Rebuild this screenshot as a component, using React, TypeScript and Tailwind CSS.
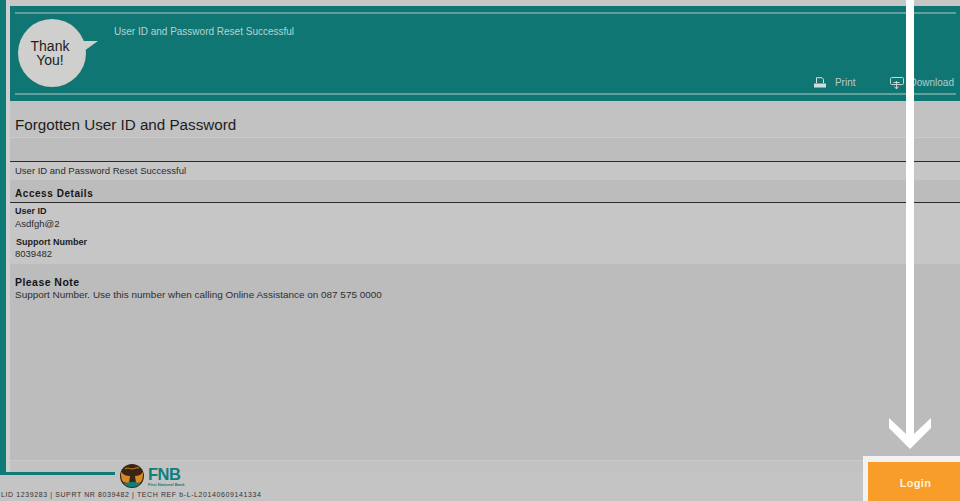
const font = { fontFamily: "'Liberation Sans', Arial, sans-serif" }

function PrintIcon() {
  return (
    <svg width="12" height="11" viewBox="0 0 12 11" fill="none">
      <path d="M2.5 6V0.7H8l1.5 1.5V6" stroke="#d4dedd" strokeWidth="1" />
      <rect x="0" y="6.5" width="12" height="4" fill="#d4dedd" />
    </svg>
  )
}

function DownloadIcon() {
  return (
    <svg width="14" height="13" viewBox="0 0 14 13" fill="none" stroke="#c6d6d4" strokeWidth="1">
      <rect x="0.5" y="0.5" width="13" height="7" rx="1" />
      <path d="M6.5 4v8M3.5 5.5h6M4.5 9.5l2 2.5 2-2.5" />
    </svg>
  )
}

function FnbLogo() {
  return (
    <div className="flex items-center gap-[4px]">
      <svg width="24" height="24" viewBox="0 0 24 24">
        <circle cx="12" cy="12" r="12" fill="#3a2413" />
        <path d="M1 8c3 3 5 4 9 4l-1 7c-3 0-6 0-7-3-1-3-1-5-1-8zM23 8c-2 3-5 4-8 4l1 7c3 0 5 0 6-3 1-3 1-5 1-8z" fill="#d98a24" />
        <path d="M3.5 19.5a12 12 0 0 0 17 0c-5-2-12-2-17 0z" fill="#0f7f7c" />
        <path d="M5 5c3-2 5 0 7 0s4-2 7-1" stroke="#d98a24" strokeWidth="1" fill="none" />
      </svg>
      <div className="flex flex-col items-start">
        <span className="text-[16.5px] leading-[16px] font-bold text-[#0f7f7c] tracking-[-0.5px]">FNB</span>
        <span className="text-[4px] leading-[5px] font-bold text-[#0f7f7c]">First National Bank</span>
      </div>
    </div>
  )
}

export default function App() {
  return (
    <div className="relative w-[960px] h-[501px] overflow-hidden bg-[#c4c4c4] text-[#222]" style={font}>
      <div className="flex h-[472px]">
        {/* left rail */}
        <div className="w-[6px] bg-[#0f7a76]" />
        <div className="w-[4px] bg-[#cfcfcf]" />
        <div className="flex-1 flex flex-col min-w-0">
          <div className="h-[6px] bg-[#c8c6c6]" />

          {/* banner */}
          <div className="h-[95px] bg-[#0f7674] pl-[5px] pr-[4px] pt-[6px] pb-[6px]">
            <div className="h-full border-y-[2px] border-[#5f9f9c] flex relative">
              <div className="relative w-[68px] h-[68px] mt-[5px] ml-[3px] rounded-full bg-[#cfcfcd] flex items-center justify-center shrink-0 pr-[4px] text-[14px] leading-[14px] text-center text-[#1c1c1c]">
                <span>Thank<br />You!</span>
                <svg className="absolute left-[60px] top-[18px]" width="20" height="14" viewBox="0 0 20 14">
                  <path d="M0 4 L20 4 L6 14 Z" fill="#cfcfcd" />
                </svg>
              </div>
              <div className="ml-[28px] mt-[11px] text-[10px] leading-[14px] text-[#b9d2d0]">User ID and Password Reset Successful</div>
              <div className="absolute right-[2px] bottom-[3px] flex items-center text-[10px] leading-[14px] text-[#b4cdcb]">
                <PrintIcon />
                <span className="ml-[9px]">Print</span>
                <span className="ml-[34px] mr-[6px] mt-[2px]"><DownloadIcon /></span>
                <span>Download</span>
              </div>
            </div>
          </div>

          {/* title */}
          <div className="h-[37px] bg-[#c2c2c2] flex items-center px-[5px] pt-[12px] text-[15.2px] text-[#1c1c1c] border-b border-[#cacaca]">
            Forgotten User ID and Password
          </div>
          <div className="h-[24px] bg-[#bdbdbd] border-b border-[#2c2c2c]" />

          <div className="h-[18px] bg-[#c6c6c6] px-[5px] flex items-center text-[9.5px] text-[#2b2b2b]">User ID and Password Reset Successful</div>

          <div className="h-[23px] bg-[#bcbcbc] border-b border-[#2c2c2c] px-[5px] pt-[5px] flex items-center text-[10px] font-bold text-[#151515] tracking-[0.55px]">Access Details</div>

          {/* details */}
          <div className="h-[61px] bg-[#c6c6c6] px-[5px] pt-[2px] text-[9.5px] text-[#2b2b2b]">
            <div className="leading-[12px] text-[9px] font-bold text-[#1b1b1b]">User ID</div>
            <div className="leading-[13px]">Asdfgh@2</div>
            <div className="leading-[12px] mt-[6px] ml-[1px] text-[9px] font-bold text-[#1b1b1b]">Support Number</div>
            <div className="leading-[12px]">8039482</div>
          </div>

          {/* note */}
          <div className="flex-1 bg-[#bcbcbc] px-[5px] pt-[12px]">
            <div className="text-[10.5px] leading-[13px] font-bold text-[#151515] tracking-[0.45px]">Please Note</div>
            <div className="text-[9.95px] leading-[12px] text-[#2f2f2f]">Support Number. Use this number when calling Online Assistance on 087 575 0000</div>
          </div>
          <div className="h-[12px] bg-[#c2c2c2] border-t border-[#cbcbcb]" />
        </div>
      </div>

      {/* footer */}
      <div className="flex items-start h-[29px]">
        <div className="w-[115px] h-[3px] bg-[#0f7a76]" />
        <div className="ml-[5px] -mt-[8px]"><FnbLogo /></div>
      </div>
      <div className="absolute left-[1px] bottom-[2px] text-[7px] leading-[9px] tracking-[0.6px] text-[#333]">LID 1239283 | SUPRT NR 8039482 | TECH REF b-L-L20140609141334</div>

      {/* login button */}
      <div className="absolute right-0 bottom-0 w-[97px] h-[45px] border-l-[5px] border-t-[6px] border-[#f2f2f2] bg-[#f99d2a] flex items-center justify-center pl-[3px] pt-[3px] text-[11px] font-bold text-[#fdf0dc] tracking-[0.3px]">Login</div>

      {/* arrow overlay */}
      <svg className="absolute left-[888px] top-0" width="46" height="450" viewBox="0 0 46 450">
        <path d="M1 418 L18 434 L18 0 L26 0 L26 434 L43 418 L43 428 L22 449 L1 428 Z" fill="#fff" />
      </svg>
    </div>
  )
}
